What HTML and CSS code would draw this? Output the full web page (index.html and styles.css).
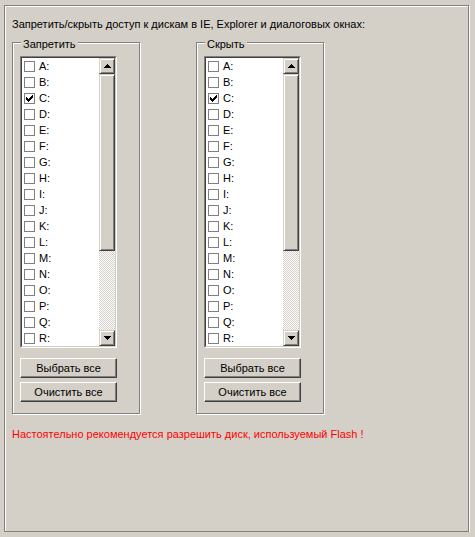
FILE: index.html
```html
<!DOCTYPE html>
<html lang="ru">
<head>
<meta charset="utf-8">
<title>Диски</title>
<link rel="stylesheet" href="styles.css">
</head>
<body>
<div class="frame">
  <div class="heading">Запретить/скрыть доступ к дискам в IE, Explorer и диалоговых окнах:</div>
  <div class="groups">
    <div class="group">
      <span class="legend">Запретить</span>
      <div class="list">
        <div class="list-inner">
          <div class="items">
            <div class="row"><span class="cb"></span>A:</div>
            <div class="row"><span class="cb"></span>B:</div>
            <div class="row"><span class="cb"><svg width="7" height="7" viewBox="0 0 7 7" shape-rendering="crispEdges"><polygon points="0,2 2,4 6,0 7,0 7,3 2,7 0,5" fill="#000"/></svg></span>C:</div>
            <div class="row"><span class="cb"></span>D:</div>
            <div class="row"><span class="cb"></span>E:</div>
            <div class="row"><span class="cb"></span>F:</div>
            <div class="row"><span class="cb"></span>G:</div>
            <div class="row"><span class="cb"></span>H:</div>
            <div class="row"><span class="cb"></span>I:</div>
            <div class="row"><span class="cb"></span>J:</div>
            <div class="row"><span class="cb"></span>K:</div>
            <div class="row"><span class="cb"></span>L:</div>
            <div class="row"><span class="cb"></span>M:</div>
            <div class="row"><span class="cb"></span>N:</div>
            <div class="row"><span class="cb"></span>O:</div>
            <div class="row"><span class="cb"></span>P:</div>
            <div class="row"><span class="cb"></span>Q:</div>
            <div class="row"><span class="cb"></span>R:</div>
          </div>
          <div class="scrollbar">
            <div class="sb-btn"><svg width="7" height="4" viewBox="0 0 7 4" shape-rendering="crispEdges"><rect x="3" y="0" width="1" height="1"/><rect x="2" y="1" width="3" height="1"/><rect x="1" y="2" width="5" height="1"/><rect x="0" y="3" width="7" height="1"/></svg></div>
            <div class="sb-thumb"></div>
            <div class="sb-track"></div>
            <div class="sb-btn"><svg width="7" height="4" viewBox="0 0 7 4" shape-rendering="crispEdges"><rect x="0" y="0" width="7" height="1"/><rect x="1" y="1" width="5" height="1"/><rect x="2" y="2" width="3" height="1"/><rect x="3" y="3" width="1" height="1"/></svg></div>
          </div>
        </div>
      </div>
      <div class="btn first">Выбрать все</div>
      <div class="btn">Очистить все</div>
    </div>
    <div class="group">
      <span class="legend">Скрыть</span>
      <div class="list">
        <div class="list-inner">
          <div class="items">
            <div class="row"><span class="cb"></span>A:</div>
            <div class="row"><span class="cb"></span>B:</div>
            <div class="row"><span class="cb"><svg width="7" height="7" viewBox="0 0 7 7" shape-rendering="crispEdges"><polygon points="0,2 2,4 6,0 7,0 7,3 2,7 0,5" fill="#000"/></svg></span>C:</div>
            <div class="row"><span class="cb"></span>D:</div>
            <div class="row"><span class="cb"></span>E:</div>
            <div class="row"><span class="cb"></span>F:</div>
            <div class="row"><span class="cb"></span>G:</div>
            <div class="row"><span class="cb"></span>H:</div>
            <div class="row"><span class="cb"></span>I:</div>
            <div class="row"><span class="cb"></span>J:</div>
            <div class="row"><span class="cb"></span>K:</div>
            <div class="row"><span class="cb"></span>L:</div>
            <div class="row"><span class="cb"></span>M:</div>
            <div class="row"><span class="cb"></span>N:</div>
            <div class="row"><span class="cb"></span>O:</div>
            <div class="row"><span class="cb"></span>P:</div>
            <div class="row"><span class="cb"></span>Q:</div>
            <div class="row"><span class="cb"></span>R:</div>
          </div>
          <div class="scrollbar">
            <div class="sb-btn"><svg width="7" height="4" viewBox="0 0 7 4" shape-rendering="crispEdges"><rect x="3" y="0" width="1" height="1"/><rect x="2" y="1" width="3" height="1"/><rect x="1" y="2" width="5" height="1"/><rect x="0" y="3" width="7" height="1"/></svg></div>
            <div class="sb-thumb"></div>
            <div class="sb-track"></div>
            <div class="sb-btn"><svg width="7" height="4" viewBox="0 0 7 4" shape-rendering="crispEdges"><rect x="0" y="0" width="7" height="1"/><rect x="1" y="1" width="5" height="1"/><rect x="2" y="2" width="3" height="1"/><rect x="3" y="3" width="1" height="1"/></svg></div>
          </div>
        </div>
      </div>
      <div class="btn first">Выбрать все</div>
      <div class="btn">Очистить все</div>
    </div>
  </div>
  <div class="warning">Настоятельно рекомендуется разрешить диск, используемый Flash !</div>
</div>
</body>
</html>
```

FILE: styles.css
```css
html, body {
  margin: 0;
  padding: 0;
  background: #d4d0c8;
}
body {
  font-family: "Liberation Sans", Arial, sans-serif;
  font-size: 11px;
  line-height: 13px;
  color: #000;
}
.frame {
  box-sizing: border-box;
  margin: 5px 0 0 4px;
  width: 465px;
  height: 527px;
  border: 1px solid #808080;
  box-shadow: inset 1px 1px 0 #fff, 1px 1px 0 #fff;
  padding: 12px 0 0 7px;
}
.heading {
  height: 13px;
  white-space: nowrap;
}
.groups {
  display: flex;
  gap: 56px;
  margin-top: 11px;
}
.group {
  position: relative;
  box-sizing: border-box;
  width: 128px;
  height: 372px;
  border: 1px solid #808080;
  box-shadow: inset 1px 1px 0 #fff, 1px 1px 0 #fff;
  padding: 13px 0 0 7px;
}
.legend {
  position: absolute;
  top: -5px;
  left: 8px;
  padding: 0 2px;
  background: #d4d0c8;
  white-space: nowrap;
}
.list {
  box-sizing: border-box;
  width: 97px;
  height: 292px;
  border: 1px solid;
  border-color: #808080 #fff #fff #808080;
}
.list-inner {
  display: flex;
  height: 100%;
  box-sizing: border-box;
  border: 1px solid;
  border-color: #404040 #d4d0c8 #d4d0c8 #404040;
  background: #fff;
}
.items {
  flex: 1;
  display: flex;
  flex-direction: column;
}
.row {
  height: 16px;
  display: flex;
  align-items: center;
  padding-left: 2px;
}
.cb {
  box-sizing: border-box;
  width: 11px;
  height: 11px;
  border: 1px solid #808080;
  background: #fff;
  margin-right: 4px;
  display: flex;
  align-items: center;
  justify-content: center;
}
.cb svg {
  display: block;
}
.scrollbar {
  width: 16px;
  display: flex;
  flex-direction: column;
}
.sb-btn, .sb-thumb {
  box-sizing: border-box;
  border: 1px solid;
  border-color: #d4d0c8 #404040 #404040 #d4d0c8;
  box-shadow: inset 1px 1px 0 #fff, inset -1px -1px 0 #808080;
  background: #d4d0c8;
}
.sb-btn {
  height: 16px;
  display: flex;
  align-items: center;
  justify-content: center;
}
.sb-btn svg {
  display: block;
  fill: #000;
}
.sb-thumb {
  height: 177px;
}
.sb-track {
  flex: 1;
  background-color: #d4d0c8;
  background-image: conic-gradient(#fff 25%, #d4d0c8 0 50%, #fff 0 75%, #d4d0c8 0);
  background-size: 2px 2px;
}
.btn {
  box-sizing: border-box;
  width: 97px;
  height: 20px;
  margin-top: 4px;
  border: 1px solid;
  border-color: #fff #404040 #404040 #fff;
  box-shadow: inset -1px -1px 0 #808080;
  display: flex;
  align-items: center;
  justify-content: center;
  white-space: nowrap;
}
.btn.first {
  margin-top: 10px;
}
.warning {
  margin-top: 14px;
  color: #ff0000;
  white-space: nowrap;
}
```
